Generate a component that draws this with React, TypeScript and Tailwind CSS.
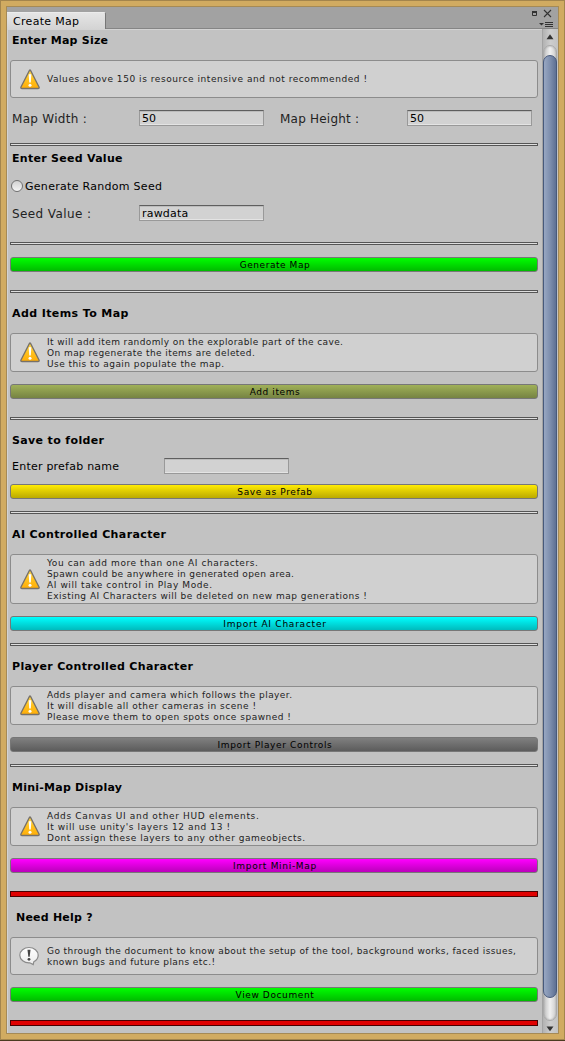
import type { ReactNode } from "react";

function Warning() {
  return (
    <svg width="20" height="21" viewBox="0 0 20 21" className="shrink-0">
      <defs>
        <linearGradient id="warn" x1="0" y1="0" x2="0" y2="1">
          <stop offset="0" stopColor="#ffd84a" />
          <stop offset="0.55" stopColor="#ffc01c" />
          <stop offset="1" stopColor="#ffad08" />
        </linearGradient>
      </defs>
      <path d="M9.6 1.2Q10 .6 10.4 1.2L19 18Q19.6 19.5 18 19.5H2Q.4 19.5 1 18Z" fill="url(#warn)" stroke="#777169" strokeWidth="1.3" />
      <path d="M8.7 5.6Q10 4.4 11.3 5.6L10.8 13.6H9.2Z" fill="#fff" />
      <circle cx="10" cy="16.3" r="1.5" fill="#fff" />
    </svg>
  );
}

function Info() {
  return (
    <svg width="20" height="20" viewBox="0 0 20 20" className="mr-px -ml-px shrink-0">
      <defs>
        <linearGradient id="bubble" x1="0" y1="0" x2="0" y2="1">
          <stop offset="0" stopColor="#fff" />
          <stop offset="1" stopColor="#ececec" />
        </linearGradient>
      </defs>
      <path d="M10 1.5C15 1.5 19.2 4.9 19.2 9.2C19.2 12.1 17.4 14.4 14.8 15.8L14.2 18.6L10.8 16.8C5.2 17.2 .8 13.5 .8 9.2C.8 4.9 5 1.5 10 1.5Z" fill="url(#bubble)" stroke="#8a8a8a" strokeWidth="1.2" />
      <path d="M8.5 3.8H11.5L10.7 10.8H9.3Z" fill="#444" />
      <circle cx="10" cy="13.3" r="1.4" fill="#444" />
    </svg>
  );
}

function Title({ children, className }: { children: ReactNode; className: string }) {
  return <h2 className={`ml-[5px] h-4 text-[11px] leading-[18px] font-bold text-black ${className}`}>{children}</h2>;
}

function HelpBox({ children, className, textClass = "pt-0.5", icon }: { children: ReactNode; className: string; textClass?: string; icon?: ReactNode }) {
  return (
    <div className={`ml-[3px] flex w-[528px] items-center gap-[7px] rounded-[3px] border border-[#8c8c8c] bg-[#d0d0d0] pl-[9px] text-[9px] leading-[11px] text-[#222] ${className}`}>
      {icon ?? <Warning />}
      <div className={`flex flex-col ${textClass}`}>{children}</div>
    </div>
  );
}

function Button({ children, className }: { children: ReactNode; className: string }) {
  return (
    <button className={`ml-[3px] flex h-[15px] w-[528px] justify-center rounded-[3px] border border-[#777] bg-linear-to-b pl-0.5 text-[9px] leading-[15px] text-black ${className}`}>
      {children}
    </button>
  );
}

function Rule({ className }: { className: string }) {
  return <div className={`ml-[3px] h-[3px] w-[528px] border border-[#555] bg-[#dedede] ${className}`} />;
}

function RedRule({ className }: { className: string }) {
  return <div className={`ml-[3px] h-1.5 w-[528px] border border-[#4a0000] bg-[#e00000] ${className}`} />;
}

function Field({ value, className }: { value: string; className: string }) {
  return (
    <div className={`h-4 w-[125px] shrink-0 border border-t-[#5f5f5f] border-r-[#999] border-b-[#999] border-l-[#999] bg-[#d2d2d2] pl-0.5 text-[11px] leading-[15px] text-black shadow-[inset_0_1px_0_#bcbcbc,inset_0_-1px_0_#e4e4e4] ${className}`}>
      {value}
    </div>
  );
}

function ScrollBar() {
  return (
    <div className="flex w-4 shrink-0 flex-col items-start border-l border-[#a3a3a3] bg-linear-to-r from-[#b2b2b2] via-[#cdcdcd] to-[#c2c2c2]">
      <div className="flex h-4 w-[14px] items-center justify-center">
        <svg width="8" height="6" viewBox="0 0 8 6"><path d="M4 .3L7.5 5.3H.5Z" fill="#333" /></svg>
      </div>
      <div className="flex h-[976px] w-[14px] flex-col rounded-full border border-[#aaa] bg-linear-to-r from-[#c2c2c2] via-[#f0f0f0] to-[#cecece] shadow-[inset_0_0_2px_#999]">
        <div className="-ml-px mt-[9px] h-[943px] w-[14px] rounded-full border border-[#47597b] bg-linear-to-r from-[#98a7c2] via-[#7e8fae] to-[#5e7093]" />
      </div>
      <div className="flex w-[14px] grow items-center justify-center pt-1">
        <svg width="8" height="6" viewBox="0 0 8 6"><path d="M4 5.3L7.5 .5H.5Z" fill="#333" /></svg>
      </div>
    </div>
  );
}

export default function App() {
  return (
    <div className="flex h-[1041px] w-[565px] flex-col border-b border-[#4b3b20] bg-[#d1ab61] font-['DejaVu_Sans',sans-serif] whitespace-nowrap">
      <div className="flex h-[1040px] flex-col border border-[#a3854d] p-[5px]">
        <div className="flex grow flex-col border border-[#a58a56] bg-[#c2c2c2]">
          <header className="flex h-[22px] justify-between border-b border-[#858585] bg-[#a2a2a2]">
            <div className="mt-[5px] h-[17px] w-[99px] rounded-tr-[2px] border-t border-r border-t-[#ececec] border-r-[#777] bg-linear-to-b from-[#e5e5e5] to-[#d4d4d4] pl-1.5 text-[11px] leading-[17px] tracking-[0.3px] text-black">
              Create Map
            </div>
            <svg width="26" height="21" viewBox="0 0 26 21" className="mr-px">
              <path d="M1.5 4.5H5.5V8.5H1.5Z" fill="none" stroke="#333" />
              <path d="M1 4H6V6H1Z" fill="#333" />
              <path d="M13 3L20 10M20 3L13 10" fill="none" stroke="#333" strokeWidth="1.1" />
              <path d="M8 16H13L10.5 18.5Z" fill="#333" />
              <path d="M14 15.5H22M14 17.5H22M14 19.5H22" stroke="#333" />
            </svg>
          </header>
          <div className="flex grow">
            <main className="flex w-[535px] shrink-0 flex-col border-t border-l border-[#d3d3d3]">
              <Title className="mt-0.5 -translate-x-px tracking-[0.24px]">Enter Map Size</Title>
              <div className="-ml-px flex flex-col">
                <HelpBox className="mt-3 h-[38px]" textClass=""><span className="tracking-[0.55px]">Values above 150 is resource intensive and not recommended !</span></HelpBox>
                <div className="mt-3 flex h-4 pl-[5px] text-[12px] leading-[19px] text-[#222]">
                  <span className="w-[127px] tracking-[0.3px]">Map Width :</span>
                  <Field value="50" className="mr-4" />
                  <span className="w-[127px] tracking-[0.22px]">Map Height :</span>
                  <Field value="50" className="" />
                </div>
                <Rule className="mt-[17px]" />
                <Title className="mt-1 tracking-[0.28px]">Enter Seed Value</Title>
                <div className="mt-3 ml-1 flex h-4 items-center gap-0.5 text-[11px] leading-4 tracking-[0.29px] text-black">
                  <span className="size-3 rounded-full border border-[#707070] bg-linear-to-b from-[#d2d2d2] to-[#f5f5f5]" />
                  <span className="pt-0.5">Generate Random Seed</span>
                </div>
                <div className="mt-[11px] flex h-4 pl-[5px] text-[12px] leading-[19px] text-[#222]">
                  <span className="w-[127px] tracking-[0.4px]">Seed Value :</span>
                  <Field value="rawdata" className="tracking-[0.2px]" />
                </div>
                <Rule className="mt-[21px]" />
                <Button className="mt-3 from-[#00ff00] to-[#00bb00] tracking-[0.55px]">Generate Map</Button>
                <Rule className="mt-[18px]" />
                <Title className="mt-3 tracking-[0.4px]">Add Items To Map</Title>
                <HelpBox className="mt-3 h-[39px]">
                  <span className="tracking-[0.4px]">It will add item randomly on the explorable part of the cave.</span>
                  <span className="tracking-[0.43px]">On map regenerate the items are deleted.</span>
                  <span className="tracking-[0.45px]">Use this to again populate the map.</span>
                </HelpBox>
                <Button className="mt-3 from-[#a0b158] to-[#768343] tracking-[0.6px]">Add items</Button>
                <Rule className="mt-[18px]" />
                <Title className="mt-3 tracking-[0.36px]">Save to folder</Title>
                <div className="mt-2.5 flex h-4 pl-[5px] text-[11px] leading-[18px] text-black">
                  <span className="w-[152px] tracking-[0.23px]">Enter prefab name</span>
                  <Field value="" className="" />
                </div>
                <Button className="mt-2.5 from-[#ffeb04] to-[#bbaa00] tracking-[0.62px]">Save as Prefab</Button>
                <Rule className="mt-3" />
                <Title className="mt-3 tracking-[0.38px]">AI Controlled Character</Title>
                <HelpBox className="mt-3 h-[50px]">
                  <span className="tracking-[0.57px]">You can add more than one AI characters.</span>
                  <span className="tracking-[0.37px]">Spawn could be anywhere in generated open area.</span>
                  <span className="tracking-[0.58px]">AI will take control in Play Mode.</span>
                  <span className="tracking-[0.49px]">Existing AI Characters will be deleted on new map generations !</span>
                </HelpBox>
                <Button className="mt-3 from-[#00ffff] to-[#00bbbd] tracking-[0.76px]">Import AI Character</Button>
                <Rule className="mt-3" />
                <Title className="mt-3 tracking-[0.34px]">Player Controlled Character</Title>
                <HelpBox className="mt-3 h-[39px]">
                  <span className="tracking-[0.45px]">Adds player and camera which follows the player.</span>
                  <span className="tracking-[0.5px]">It will disable all other cameras in scene !</span>
                  <span className="tracking-[0.5px]">Please move them to open spots once spawned !</span>
                </HelpBox>
                <Button className="mt-3 from-[#808080] to-[#5c5c5c] tracking-[0.64px]">Import Player Controls</Button>
                <Rule className="mt-3" />
                <Title className="mt-3 tracking-[0.24px]">Mini-Map Display</Title>
                <HelpBox className="mt-3 h-[39px]">
                  <span className="tracking-[0.66px]">Adds Canvas UI and other HUD elements.</span>
                  <span className="tracking-[0.61px]">It will use unity's layers 12 and 13 !</span>
                  <span className="tracking-[0.51px]">Dont assign these layers to any other gameobjects.</span>
                </HelpBox>
                <Button className="mt-3 from-[#ff00ff] to-[#bb00bb] tracking-[0.7px]">Import Mini-Map</Button>
                <RedRule className="mt-[18px]" />
                <Title className="mt-3 pl-1 tracking-[0.22px]">Need Help ?</Title>
                <HelpBox className="mt-3 h-[38px]" icon={<Info />}>
                  <span className="tracking-[0.415px]">Go through the document to know about the setup of the tool, background works, faced issues,</span>
                  <span className="tracking-[0.43px]">known bugs and future plans etc.!</span>
                </HelpBox>
                <Button className="mt-3 from-[#00ff00] to-[#00bb00] tracking-[0.62px]">View Document</Button>
                <RedRule className="mt-[18px]" />
              </div>
            </main>
            <ScrollBar />
          </div>
        </div>
      </div>
    </div>
  );
}
